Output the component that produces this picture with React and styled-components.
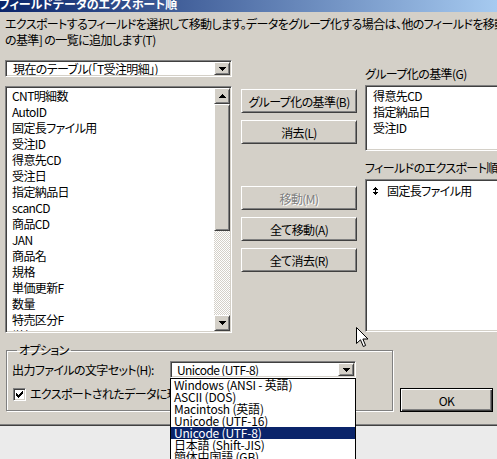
import React from "react";
import styled, { createGlobalStyle, css } from "styled-components";

const GlobalStyle = createGlobalStyle`
  html, body {
    margin: 0;
    padding: 0;
    width: 497px;
    height: 459px;
    overflow: hidden;
    background: #ebebeb;
  }
  body {
    font-family: "Noto Sans CJK JP", "Noto Sans", sans-serif;
    font-size: 12px;
    font-feature-settings: "palt" 1;
    letter-spacing: -0.6px;
    color: #000;
  }
  * { box-sizing: border-box; }
`;

// classic 3D edges
const sunken = css`
  border: 1px solid;
  border-color: #808080 #fff #fff #808080;
  box-shadow: inset 1px 1px #404040, inset -1px -1px #d4d0c8;
`;
const raised = css`
  border: 1px solid;
  border-color: #fff #404040 #404040 #fff;
  box-shadow: inset 1px 1px #d4d0c8, inset -1px -1px #808080;
`;

const Dialog = styled.div`
  position: relative;
  width: 497px;
  height: 426px;
  background: #d4d0c8;
  border-bottom: 1px solid #404040;
  box-shadow: inset 0 -1px #808080;
`;

const TitleBar = styled.div`
  height: 12px;
  overflow: hidden;
  background: linear-gradient(to right, #0a246a, #a6caf0);
  color: #fff;
  font-weight: bold;
  line-height: 14px;
  letter-spacing: 0;
  white-space: nowrap;
`;

const TitleText = styled.div`
  margin-top: -3px;
  margin-left: -1px;
`;

const Content = styled.div`
  padding-left: 5px;
`;

const Desc = styled.div`
  padding-top: 4px;
  line-height: 16px;
  white-space: nowrap;
`;

const Main = styled.div`
  display: flex;
  align-items: flex-start;
  margin-top: 12px;
`;

const LeftCol = styled.div`
  width: 227px;
  flex-shrink: 0;
  display: flex;
  flex-direction: column;
`;

const MidCol = styled.div`
  width: 116px;
  flex-shrink: 0;
  margin-left: 9px;
  padding-top: 29px;
  display: flex;
  flex-direction: column;
`;

const RightCol = styled.div`
  width: 170px;
  margin-left: 8px;
  flex-shrink: 0;
  display: flex;
  flex-direction: column;
`;

const Combo = styled.div`
  ${sunken};
  position: relative;
  width: ${(p) => p.$w}px;
  height: 17px;
  padding: 1px;
  background: #fff;
  display: flex;
  align-items: stretch;
  flex-shrink: 0;
`;

const ComboText = styled.div`
  flex: 1;
  padding-left: ${(p) => p.$pad}px;
  line-height: 14px;
  white-space: nowrap;
  overflow: hidden;
`;

const ArrowBtn = styled.div`
  ${raised};
  width: 16px;
  height: ${(p) => (p.$h ? `${p.$h}px` : "auto")};
  background: #d4d0c8;
  display: flex;
  align-items: center;
  justify-content: center;
  flex-shrink: 0;
`;

const Tri = ({ up }) => (
  <svg width="7" height="4" viewBox="0 0 7 4" shapeRendering="crispEdges">
    <path
      d="M0 0h7v1h-1v1h-1v1h-1v1h-1v-1h-1v-1h-1v-1h-1z"
      fill="#000"
      transform={up ? "rotate(180 3.5 2)" : undefined}
    />
  </svg>
);

const ListBox = styled.div`
  ${sunken};
  margin-top: 9px;
  width: 227px;
  height: 247px;
  padding: 1px;
  background: #fff;
  display: flex;
`;

const Items = styled.div`
  flex: 1;
  overflow: hidden;
  padding-top: ${(p) => p.$top || 0}px;
  padding-left: ${(p) => p.$left}px;
`;

const Item = styled.div`
  height: ${(p) => p.$h || 16}px;
  line-height: ${(p) => p.$h || 16}px;
  white-space: nowrap;
  display: flex;
  align-items: center;
  ${(p) =>
    p.$sel &&
    css`
      background: #0a246a;
      color: #fff;
    `}
`;

const ScrollBar = styled.div`
  width: 16px;
  display: flex;
  flex-direction: column;
`;

const Thumb = styled.div`
  ${raised};
  height: 127px;
  background: #d4d0c8;
`;

const Track = styled.div`
  flex: 1;
  background: repeating-conic-gradient(#d4d0c8 0 25%, #fff 0 50%) 0 0 / 2px 2px;
`;

const Button = styled.div`
  ${raised};
  height: 24px;
  margin-top: ${(p) => p.$mt || 0}px;
  background: #d4d0c8;
  display: flex;
  align-items: center;
  justify-content: center;
  white-space: nowrap;
  ${(p) =>
    p.$disabled &&
    css`
      color: #808080;
      text-shadow: 1px 1px #fff;
    `}
`;

const Label = styled.div`
  line-height: 16px;
  margin-top: ${(p) => p.$mt}px;
  white-space: nowrap;
`;

const Box = styled.div`
  ${sunken};
  margin-top: 3px;
  height: ${(p) => p.$h}px;
  background: #fff;
  display: flex;
`;

const Bottom = styled.div`
  display: flex;
  align-items: flex-end;
  margin-top: 10px;
`;

const Group = styled.fieldset`
  margin: 0 0 0 1px;
  width: 387px;
  height: 68px;
  padding: 4px 0 0 5px;
  border: 1px solid #808080;
  box-shadow: inset 1px 1px #fff, 1px 1px #fff;
  min-width: 0;
  flex-shrink: 0;
`;

const Legend = styled.legend`
  margin-left: 5px;
  padding: 0 2px;
  line-height: 14px;
`;

const OptRow = styled.div`
  display: flex;
  align-items: center;
  margin-top: ${(p) => p.$mt || 0}px;
`;

const OptLabel = styled.div`
  width: 158px;
  flex-shrink: 0;
  line-height: 17px;
  white-space: nowrap;
`;

const Check = styled.div`
  ${sunken};
  width: 13px;
  height: 13px;
  margin-left: 1px;
  flex-shrink: 0;
  background: #fff;
  display: flex;
  align-items: center;
  justify-content: center;
`;

const CheckText = styled.div`
  margin-left: 4px;
  line-height: 14px;
  white-space: nowrap;
`;

const Popup = styled.div`
  position: absolute;
  left: -1px;
  top: 16px;
  width: 186px;
  height: 110px;
  border: 1px solid #000;
  background: #fff;
  letter-spacing: -0.2px;
  z-index: 2;
`;

const OkButton = styled(Button)`
  width: 93px;
  flex-shrink: 0;
  margin-left: 7px;
  margin-bottom: -1px;
  border: 1px solid #000;
  box-shadow: inset 1px 1px #fff, inset -1px -1px #404040, inset -2px -2px #808080;
`;

const Cursor = styled.svg`
  position: absolute;
  left: 356px;
  top: 327px;
  z-index: 3;
`;

const leftItems = [
  "CNT明細数",
  "AutoID",
  "固定長ファイル用",
  "受注ID",
  "得意先CD",
  "受注日",
  "指定納品日",
  "scanCD",
  "商品CD",
  "JAN",
  "商品名",
  "規格",
  "単価更新F",
  "数量",
  "特売区分F",
  "単価",
];

const charsets = [
  "Windows (ANSI - 英語)",
  "ASCII (DOS)",
  "Macintosh (英語)",
  "Unicode (UTF-16)",
  "Unicode (UTF-8)",
  "日本語 (Shift-JIS)",
  "簡体中国語 (GB)",
  "繁体中国語 (Big5)",
];

const OrderMark = () => (
  <svg width="5" height="8" viewBox="0 0 5 8" shapeRendering="crispEdges" style={{ marginRight: 9 }}>
    <path d="M2 0h1v1h1v1h1v1h-2v2h2v1h-1v1h-1v1h-1v-1h-1v-1h-1v-1h2v-2h-2v-1h1v-1h1z" fill="#000" />
  </svg>
);

export default function App() {
  return (
    <>
      <GlobalStyle />
      <Dialog>
        <TitleBar>
          <TitleText>フィールドデータのエクスポート順</TitleText>
        </TitleBar>
        <Content>
          <Desc>
            エクスポートするフィールドを選択して移動します。データをグループ化する場合は、他のフィールドを移動する前に [グループ化
            <br />
            の基準] の一覧に追加します(T)
          </Desc>
          <Main>
            <LeftCol>
              <Combo $w={227}>
                <ComboText $pad={6}>現在のテーブル(「T受注明細」)</ComboText>
                <ArrowBtn>
                  <Tri />
                </ArrowBtn>
              </Combo>
              <ListBox>
                <Items $left={5}>
                  {leftItems.map((t) => (
                    <Item key={t}>{t}</Item>
                  ))}
                </Items>
                <ScrollBar>
                  <ArrowBtn $h={16}>
                    <Tri up />
                  </ArrowBtn>
                  <Thumb />
                  <Track />
                  <ArrowBtn $h={16}>
                    <Tri />
                  </ArrowBtn>
                </ScrollBar>
              </ListBox>
            </LeftCol>
            <MidCol>
              <Button>グループ化の基準(B)</Button>
              <Button $mt={7}>消去(L)</Button>
              <Button $mt={42} $disabled>
                移動(M)
              </Button>
              <Button $mt={7}>全て移動(A)</Button>
              <Button $mt={7}>全て消去(R)</Button>
            </MidCol>
            <RightCol>
              <Label $mt={6}>グループ化の基準(G)</Label>
              <Box $h={66}>
                <Items $top={2} $left={7}>
                  <Item>得意先CD</Item>
                  <Item>指定納品日</Item>
                  <Item>受注ID</Item>
                </Items>
              </Box>
              <Label $mt={9}>フィールドのエクスポート順(C)</Label>
              <Box $h={153}>
                <Items $top={3} $left={7}>
                  <Item>
                    <OrderMark />
                    固定長ファイル用
                  </Item>
                </Items>
              </Box>
            </RightCol>
          </Main>
          <Bottom>
            <Group>
              <Legend>オプション</Legend>
              <OptRow>
                <OptLabel>出力ファイルの文字セット(H):</OptLabel>
                <Combo $w={186}>
                  <ComboText $pad={5}>Unicode (UTF-8)</ComboText>
                  <ArrowBtn>
                    <Tri />
                  </ArrowBtn>
                  <Popup>
                    {charsets.map((c) => (
                      <Item key={c} $h={12} $sel={c === "Unicode (UTF-8)"} style={{ paddingLeft: 3 }}>
                        {c}
                      </Item>
                    ))}
                  </Popup>
                </Combo>
              </OptRow>
              <OptRow $mt={9}>
                <Check>
                  <svg width="7" height="7" viewBox="0 0 7 7" shapeRendering="crispEdges">
                    <path d="M6 0h1v3h-1v1h-1v1h-1v1h-1v1h-1v-1h-1v-1h-1v-3h1v1h1v1h1v-1h1v-1h1z" fill="#000" />
                  </svg>
                </Check>
                <CheckText>エクスポートされたデータに現在のフィルタを適用する(F)</CheckText>
              </OptRow>
            </Group>
            <OkButton>OK</OkButton>
          </Bottom>
        </Content>
        <Cursor width="13" height="21" viewBox="0 0 13 21">
          <path
            d="M0.5 0.5 L0.5 16.5 L4.5 12.8 L7.3 19.5 L9.6 18.5 L6.9 12 L12 12 Z"
            fill="#fff"
            stroke="#000"
            strokeWidth="1"
            strokeLinejoin="miter"
          />
        </Cursor>
      </Dialog>
    </>
  );
}
